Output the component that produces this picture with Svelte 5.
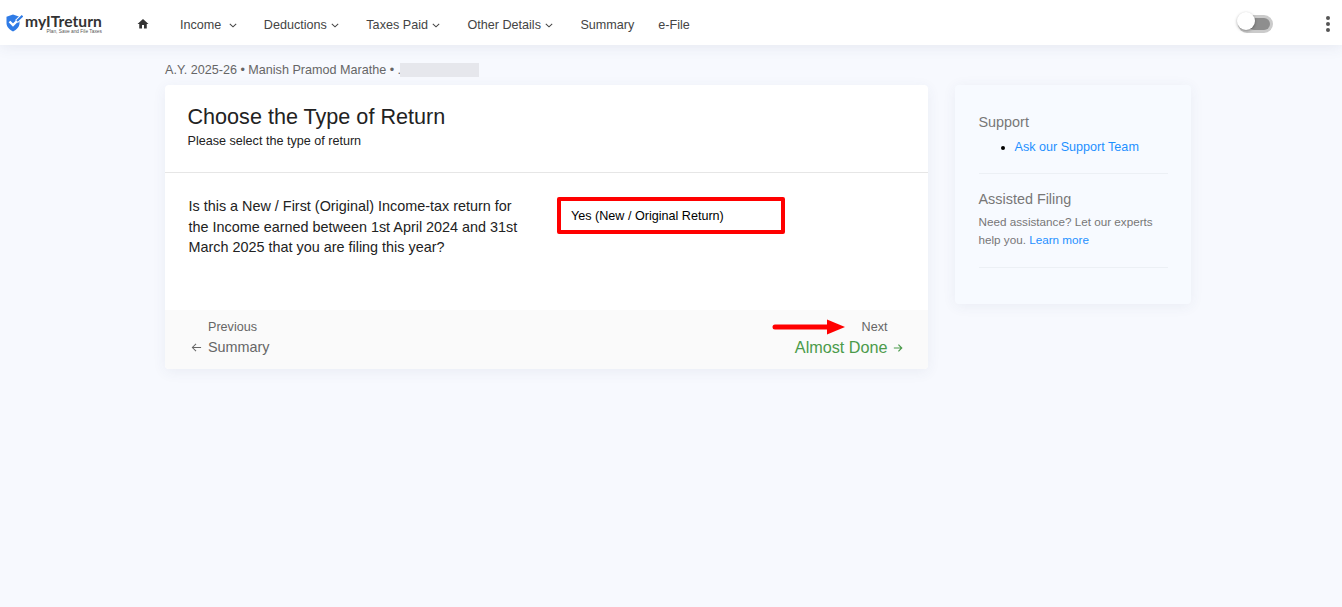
<script>
	const menu = [
		{ label: 'Income', caret: true, wide: true },
		{ label: 'Deductions', caret: true },
		{ label: 'Taxes Paid', caret: true },
		{ label: 'Other Details', caret: true },
		{ label: 'Summary', caret: false },
		{ label: 'e-File', caret: false }
	];
</script>

<nav class="navbar">
	<div class="brand">
		<svg class="shield" viewBox="0 0 17 18" width="17" height="18">
			<path d="M7 .5 L13.500 2.800 V9 C13.500 13 10.500 15.600 7 17.500 C3.500 15.600 .5 13 .5 9 V2.800 Z" fill="#2f7be6" />
			<path d="M3.500 7.500 L7 11 L12 6" fill="none" stroke="#fff" stroke-width="2.400" />
			<path d="M10.500 7.500 L16.500 1.800" fill="none" stroke="#fff" stroke-width="4" />
			<path d="M11 7 L16.500 1.800" fill="none" stroke="#2f7be6" stroke-width="2.200" />
		</svg>
		<div class="brand-text">
			<span class="brand-name">myITreturn</span>
			<span class="brand-tag">Plan, Save and File Taxes</span>
		</div>
	</div>
	<svg class="home" viewBox="0 0 24 24" width="12" height="12">
		<path d="M10 21v-7h4v7h5.500v-9H23L12 2 1 12h3.500v9z" fill="#333" />
	</svg>
	<ul class="menu">
		{#each menu as item}
			<li class:wide={item.wide}>
				{item.label}
				{#if item.caret}
					<svg class="caret" viewBox="0 0 10 6" width="8" height="5">
						<path d="M1 1l4 3.600L9 1" fill="none" stroke="#444" stroke-width="1.300" />
					</svg>
				{/if}
			</li>
		{/each}
	</ul>
	<div class="toggle"><span class="knob"></span></div>
	<div class="dots"><i></i><i></i><i></i></div>
</nav>

<main class="page">
	<div class="crumb">
		A.Y. 2025-26 • Manish Pramod Marathe • .<span class="pan"></span>
	</div>
	<div class="columns">
		<section class="card">
			<header class="head">
				<h1>Choose the Type of Return</h1>
				<p>Please select the type of return</p>
			</header>
			<div class="body">
				<p class="question">
					Is this a New / First (Original) Income-tax return for the Income earned between 1st April
					2024 and 31st March 2025 that you are filing this year?
				</p>
				<button class="answer">Yes (New / Original Return)</button>
			</div>
			<footer class="foot">
				<div class="prev">
					<span class="small">Previous</span>
					<span class="large">
						<svg class="arrow" viewBox="0 0 12 12" width="11" height="11">
							<path d="M11 6H1.500M5.500 2L1.500 6l4 4" fill="none" stroke="#666" stroke-width="1.100" />
						</svg>
						Summary
					</span>
				</div>
				<div class="next">
					<span class="small next-label">
						<svg class="red-arrow" viewBox="0 0 73 16" width="73" height="16">
							<path d="M3 8h54" stroke="#f00" stroke-width="5" stroke-linecap="round" />
							<path d="M55 .5L73 8 55 15.500z" fill="#f00" />
						</svg>
						Next
					</span>
					<span class="almost">
						Almost Done
						<svg class="go" viewBox="0 0 12 12" width="10" height="10">
							<path d="M1 6h9.500M6.500 2l4 4-4 4" fill="none" stroke="#4b9b4b" stroke-width="1.400" />
						</svg>
					</span>
				</div>
			</footer>
		</section>

		<aside class="side">
			<div class="block">
				<h2>Support</h2>
				<ul><li><a href="#support">Ask our Support Team</a></li></ul>
			</div>
			<div class="block">
				<h2>Assisted Filing</h2>
				<p>Need assistance? Let our experts help you. <a href="#learn">Learn more</a></p>
			</div>
		</aside>
	</div>
</main>

<style>
	:global(body) {
		background: #f7f9fe;
		font-family: 'Liberation Sans', Arial, sans-serif;
		min-height: 607px;
	}
	.navbar {
		display: flex;
		align-items: center;
		height: 45px;
		box-sizing: border-box;
		padding-top: 3px;
		background: #fff;
		box-shadow: 0 1px 14px rgba(60, 70, 110, 0.1);
		position: relative;
	}
	.brand {
		display: flex;
		align-items: center;
		gap: 2px;
		margin: -3px 0 0 6px;
		width: 125px;
	}
	.brand-text {
		display: flex;
		flex-direction: column;
		align-items: flex-end;
		margin-top: 5px;
	}
	.brand-name {
		font-family: Lato, sans-serif;
		font-weight: 700;
		font-size: 15.6px;
		letter-spacing: 0.05px;
		line-height: 14px;
		color: #333;
	}
	.brand-tag {
		font-size: 4.8px;
		line-height: 8px;
		color: #555;
	}
	.home {
		margin-left: 6px;
	}
	.menu {
		display: flex;
		list-style: none;
		margin: 2px 0 0 31px;
		padding: 0;
		font-size: 12.6px;
		color: #444;
		flex: 1;
	}
	.menu li {
		margin-right: 27px;
		white-space: nowrap;
	}
	.menu li:nth-child(5) {
		margin-right: 24px;
	}
	.caret {
		margin-left: 1px;
		vertical-align: 1px;
	}
	.wide .caret {
		margin-left: 4px;
	}
	.toggle {
		width: 35px;
		height: 18px;
		border-radius: 9px;
		background: #cbcbcb;
		margin-right: 53px;
		position: relative;
		box-sizing: border-box;
		padding: 3px 3px 3px 10px;
	}
	.toggle::before {
		content: '';
		display: block;
		height: 12px;
		border-radius: 6px;
		background: #8e8e8e;
	}
	.knob {
		position: absolute;
		left: -1px;
		top: -3px;
		width: 18px;
		height: 18px;
		border-radius: 50%;
		background: #fff;
		box-shadow: 0 1px 3px rgba(0, 0, 0, 0.35);
	}
	.dots {
		display: flex;
		flex-direction: column;
		gap: 2px;
		margin-right: 12px;
	}
	.dots i {
		width: 4px;
		height: 4px;
		border-radius: 50%;
		background: #555;
	}
	.page {
		padding: 17px 0 0 165px;
	}
	.crumb {
		display: flex;
		align-items: center;
		height: 16px;
		font-size: 12.6px;
		color: #666;
		white-space: pre-wrap;
		margin-bottom: 7px;
	}
	.pan {
		width: 79px;
		height: 14px;
		margin-left: -1px;
		background: #e6e7ec;
	}
	.columns {
		display: flex;
		gap: 27px;
		align-items: flex-start;
	}
	.card {
		width: 763px;
		background: #fff;
		border-radius: 4px;
		box-shadow: 0 3px 14px rgba(60, 70, 110, 0.07);
		overflow: hidden;
	}
	.head {
		padding: 19px 22.5px 0;
		height: 68px;
		border-bottom: 1px solid #e6e6e6;
	}
	h1 {
		margin: 0;
		font-weight: 400;
		font-size: 21.6px;
		line-height: 26px;
		color: #222;
	}
	.head p {
		margin: 3px 0 0;
		font-size: 12.6px;
		line-height: 16px;
		color: #222;
	}
	.body {
		display: flex;
		height: 137px;
		box-sizing: border-box;
		padding: 23px 0 0 23.5px;
	}
	.question {
		margin: 0;
		width: 345.5px;
		font-size: 14.4px;
		line-height: 20.7px;
		color: #222;
	}
	.answer {
		margin: 1px 0 0 23px;
		width: 228px;
		height: 37px;
		box-sizing: border-box;
		border: 4px solid #f00;
		border-radius: 2px;
		background: #fff;
		padding: 0 0 0 10px;
		text-align: left;
		font: inherit;
		font-size: 12.6px;
		color: #000;
	}
	.foot {
		display: flex;
		justify-content: space-between;
		height: 59px;
		background: #fafafa;
		padding: 9px 25px 0 26px;
		box-sizing: border-box;
	}
	.prev,
	.next {
		display: flex;
		flex-direction: column;
	}
	.next {
		align-items: flex-end;
	}
	.small {
		font-size: 12.6px;
		line-height: 16px;
		color: #666;
	}
	.prev .small {
		padding-left: 17px;
	}
	.large {
		font-size: 14.4px;
		line-height: 20px;
		margin-top: 2px;
		color: #666;
	}
	.arrow {
		margin-right: 2px;
		vertical-align: -1px;
	}
	.next-label {
		display: flex;
		align-items: center;
		gap: 17px;
		margin-right: 15.5px;
	}
	.almost {
		font-size: 16.2px;
		line-height: 20px;
		margin-top: 2px;
		color: #4b9b4b;
	}
	.go {
		margin-left: 1px;
	}
	.side {
		width: 236px;
		height: 219px;
		box-sizing: border-box;
		background: #f7faff;
		border-radius: 4px;
		box-shadow: 0 2px 14px rgba(60, 70, 110, 0.07);
		padding: 28px 23.5px 0;
	}
	.block {
		border-bottom: 1px solid #ecf0f5;
		margin-bottom: 16px;
	}
	.block:first-child {
		height: 60px;
	}
	.block:last-child {
		height: 77px;
	}
	h2 {
		margin: 0;
		font-weight: 400;
		font-size: 14.4px;
		line-height: 18px;
		color: #777;
	}
	.side ul {
		margin: 8px 0 0;
		padding-left: 36px;
		font-size: 12.6px;
		line-height: 16px;
	}
	.side p {
		margin: 5px 0 0;
		font-size: 11.7px;
		line-height: 17.5px;
		color: #777;
	}
	a {
		color: #1e90ff;
		text-decoration: none;
	}
</style>
